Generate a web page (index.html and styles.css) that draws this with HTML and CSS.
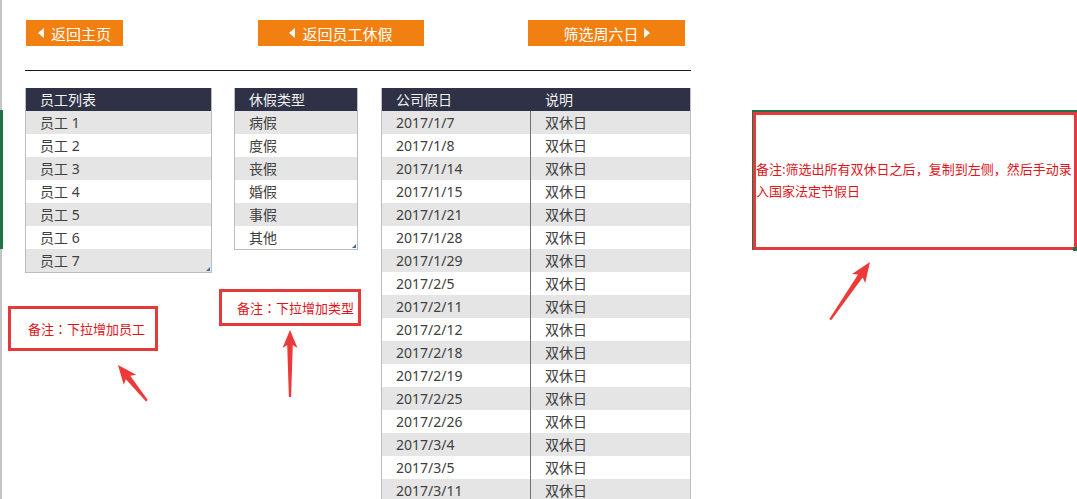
FILE: index.html
```html
<!DOCTYPE html>
<html lang="zh-CN">
<head>
<meta charset="utf-8">
<title>公司假日</title>
<link rel="stylesheet" href="styles.css">
</head>
<body>
<div class="page">
  <div class="gutter"><div class="gutter-sel"></div></div>
  <div class="sheet">
    <div class="toolbar">
      <a class="btn btn-home"><svg class="tri" width="6" height="10" viewBox="0 0 6 10"><polygon points="6,0 6,10 0,5" fill="#fff"/></svg>返回主页</a>
      <a class="btn btn-leave"><svg class="tri" width="6" height="10" viewBox="0 0 6 10"><polygon points="6,0 6,10 0,5" fill="#fff"/></svg>返回员工休假</a>
      <a class="btn btn-filter">筛选周六日<svg class="tri tri-r" width="6" height="10" viewBox="0 0 6 10"><polygon points="0,0 0,10 6,5" fill="#fff"/></svg></a>
    </div>
    <div class="rule"></div>
    <div class="tables">
      <div class="col col-emp">
        <div class="tbl">
          <div class="tr th"><div class="td">员工列表</div></div>
          <div class="tr"><div class="td">员工 1</div></div>
          <div class="tr"><div class="td">员工 2</div></div>
          <div class="tr"><div class="td">员工 3</div></div>
          <div class="tr"><div class="td">员工 4</div></div>
          <div class="tr"><div class="td">员工 5</div></div>
          <div class="tr"><div class="td">员工 6</div></div>
          <div class="tr"><div class="td">员工 7</div></div>
          <span class="resize"></span>
        </div>
        <div class="note note-emp">备注<span class="p">：</span>下拉增加员工</div>
      </div>
      <div class="col col-type">
        <div class="tbl">
          <div class="tr th"><div class="td">休假类型</div></div>
          <div class="tr"><div class="td">病假</div></div>
          <div class="tr"><div class="td">度假</div></div>
          <div class="tr"><div class="td">丧假</div></div>
          <div class="tr"><div class="td">婚假</div></div>
          <div class="tr"><div class="td">事假</div></div>
          <div class="tr"><div class="td">其他</div></div>
          <span class="resize"></span>
        </div>
        <div class="note note-type">备注<span class="p">：</span>下拉增加类型</div>
      </div>
      <div class="col col-hol">
        <div class="tbl tbl2">
          <div class="tr th"><div class="td">公司假日</div><div class="td">说明</div></div>
          <div class="tr"><div class="td">2017/1/7</div><div class="td">双休日</div></div>
          <div class="tr"><div class="td">2017/1/8</div><div class="td">双休日</div></div>
          <div class="tr"><div class="td">2017/1/14</div><div class="td">双休日</div></div>
          <div class="tr"><div class="td">2017/1/15</div><div class="td">双休日</div></div>
          <div class="tr"><div class="td">2017/1/21</div><div class="td">双休日</div></div>
          <div class="tr"><div class="td">2017/1/28</div><div class="td">双休日</div></div>
          <div class="tr"><div class="td">2017/1/29</div><div class="td">双休日</div></div>
          <div class="tr"><div class="td">2017/2/5</div><div class="td">双休日</div></div>
          <div class="tr"><div class="td">2017/2/11</div><div class="td">双休日</div></div>
          <div class="tr"><div class="td">2017/2/12</div><div class="td">双休日</div></div>
          <div class="tr"><div class="td">2017/2/18</div><div class="td">双休日</div></div>
          <div class="tr"><div class="td">2017/2/19</div><div class="td">双休日</div></div>
          <div class="tr"><div class="td">2017/2/25</div><div class="td">双休日</div></div>
          <div class="tr"><div class="td">2017/2/26</div><div class="td">双休日</div></div>
          <div class="tr"><div class="td">2017/3/4</div><div class="td">双休日</div></div>
          <div class="tr"><div class="td">2017/3/5</div><div class="td">双休日</div></div>
          <div class="tr"><div class="td">2017/3/11</div><div class="td">双休日</div></div>
        </div>
      </div>
      <div class="col col-memo">
        <div class="memo-sel">
          <div class="memo">
            <div class="memo-text"><span>备注:筛选出所有双休日之后<span class="p">，</span>复制到左侧<span class="p">，</span>然后手动录</span><span>入国家法定节假日</span></div>
          </div>
          <span class="handle"></span>
        </div>
      </div>
    </div>
  </div>
  <svg class="arrows" width="1077" height="499" viewBox="0 0 1077 499">
    <g fill="#ec3a3a">
      <polygon transform="translate(118,365) rotate(-38.9)" points="0,0 8,19 2.8,16 1.1,46 -1.1,46 -2.8,16 -8,19"/>
      <polygon transform="translate(290,330)" points="0,0 7.5,18 2.8,15 1.1,67 -1.1,67 -2.8,15 -7.5,18"/>
      <polygon transform="translate(870,262) rotate(34.6)" points="0,0 8,20 2.8,17 1.1,70 -1.1,70 -2.8,17 -8,20"/>
    </g>
  </svg>
</div>
</body>
</html>
```
FILE: styles.css
```css
html, body {
  margin: 0;
  padding: 0;
  background: #fff;
}
body {
  font-family: "Noto Sans", "Noto Sans CJK SC", sans-serif;
  color: #404040;
  overflow: hidden;
}
.page {
  position: relative;
  width: 1077px;
  height: 499px;
  overflow: hidden;
  display: flex;
  align-items: flex-start;
}
.gutter {
  width: 2px;
  height: 499px;
  background: #c4c4c4;
  flex: none;
}
.gutter-sel {
  margin-top: 110px;
  width: 3px;
  height: 139px;
  background: #217346;
}
.sheet {
  flex: none;
  width: 1075px;
}
.toolbar {
  display: flex;
  padding-top: 20px;
}
.btn {
  display: flex;
  align-items: center;
  justify-content: center;
  height: 26px;
  background: #f18010;
  color: #fff;
  font-size: 15px;
  font-family: "Noto Sans CJK SC", sans-serif;
  text-decoration: none;
  flex: none;
}
.tri { margin-right: 7px; }
.tri-r { margin-right: 0; margin-left: 5px; }
.btn-home { margin-left: 24px; width: 97px; }
.btn-leave { margin-left: 135px; width: 166px; }
.btn-filter { margin-left: 104px; width: 157px; }
.rule {
  margin-top: 24px;
  margin-left: 23px;
  width: 666px;
  height: 1px;
  background: #1a1a1a;
}
.tables {
  display: flex;
  align-items: flex-start;
  margin-top: 17px;
  margin-left: 23px;
}
.col { flex: none; }
.col-emp { width: 187px; }
.col-type { width: 124px; margin-left: 22px; }
.col-hol { width: 310px; margin-left: 23px; }
.col-memo { width: 325px; margin-left: 61px; margin-top: 22px; }
.tbl {
  position: relative;
  border: 1px solid #bcbcbc;
  border-top: none;
  font-size: 14px;
}
.tr {
  display: flex;
  height: 23px;
  line-height: 23px;
}
.tr:nth-child(even) { background: #e5e5e5; }
.tr.th {
  background: #2f3146;
  color: #f2f2f2;
}
.td {
  padding-left: 14px;
  white-space: nowrap;
  flex: 1;
}
.tbl2 .td:first-child {
  flex: none;
  width: 134px;
  border-right: 1px solid #6e7080;
}
.tbl2 .th .td:first-child { border-right-color: #2f3146; }
.resize {
  position: absolute;
  right: 1px;
  bottom: 1px;
  width: 0;
  height: 0;
  border-left: 4px solid transparent;
  border-bottom: 4px solid #4766a8;
}
.p {
  font-family: "Noto Sans CJK TC", sans-serif;
}
.note {
  box-sizing: border-box;
  border: 3px solid #e5393b;
  color: #e0141c;
  font-size: 13px;
  font-family: "Noto Sans CJK SC", sans-serif;
  display: flex;
  align-items: center;
  white-space: nowrap;
}
.note-emp {
  margin-top: 33px;
  margin-left: -17px;
  width: 150px;
  height: 45px;
  padding-left: 17px;
}
.note-type {
  margin-top: 39px;
  margin-left: -15px;
  width: 142px;
  height: 37px;
  padding-left: 15px;
}
.memo-sel {
  position: relative;
  border-top: 2px solid #217346;
  border-left: 1px solid #217346;
}
.memo {
  box-sizing: border-box;
  width: 324px;
  height: 138px;
  border: 3px solid #e5393b;
  display: flex;
  align-items: center;
}
.memo-text {
  display: flex;
  flex-direction: column;
  color: #e0141c;
  font-size: 13px;
  line-height: 22px;
  font-family: "Noto Sans CJK SC", sans-serif;
  white-space: nowrap;
  margin-top: -2px;
}
.handle {
  position: absolute;
  right: 0;
  bottom: -1px;
  width: 4px;
  height: 4px;
  background: #217346;
}
.arrows {
  position: absolute;
  left: 0;
  top: 0;
  pointer-events: none;
}
```
